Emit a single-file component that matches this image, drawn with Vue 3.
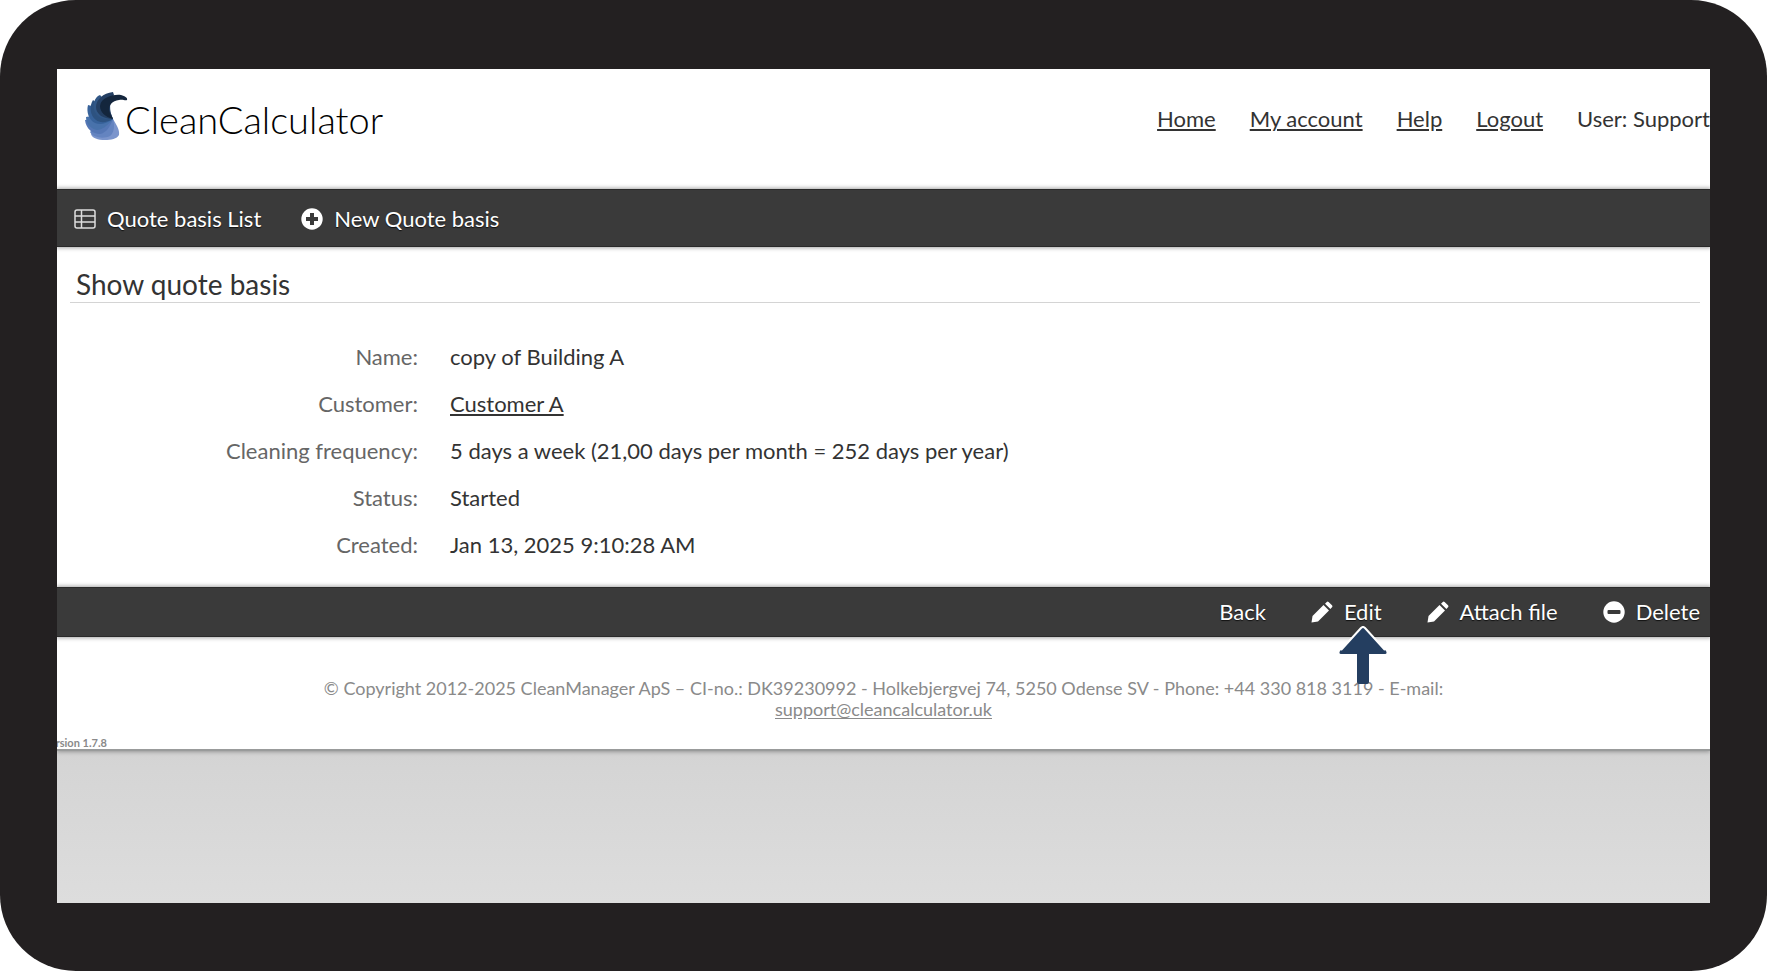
<script setup>
import { ref } from "vue";

const userLinks = ["Home", "My account", "Help", "Logout"];

const details = ref([
  { label: "Name", value: "copy of Building A" },
  { label: "Customer", value: "Customer A", link: true },
  { label: "Cleaning frequency", value: "5 days a week (21,00 days per month = 252 days per year)" },
  { label: "Status", value: "Started" },
  { label: "Created", value: "Jan 13, 2025 9:10:28 AM" }
]);

const actions = [
  { label: "Back" },
  { label: "Edit", icon: "pencil", pointer: true },
  { label: "Attach file", icon: "pencil" },
  { label: "Delete", icon: "minus" }
];
</script>

<template>
  <div class="frame">
    <div class="screen">
      <div class="page">
        <header class="header">
          <a class="logo" href="#">
            <svg class="logo-mark" viewBox="0 0 43 48" aria-hidden="true">
              <path fill="#7b95cc" d="M28 27C31 32 35 38 34 43C32 47 26 48 20 48C13 48 7 46 6 42C12 38 20 32 28 27Z" />
              <path fill="#6484c0" d="M28 27C30 34 29 41 25 44C19 47 8 46 5 40C10 34 18 30 28 27Z" />
              <path fill="#5577b5" d="M28 27C25 35 21 41 15 42C8 42 1 37 0 28C8 27 18 26 28 27Z" />
              <path fill="#4872ab" d="M28 27C22 34 17 38 12 38C6 37 1 32 1 25C8 23 18 24 28 27Z" />
              <path fill="#37629a" d="M28 27C21 32 15 33 10 31C4 28 1 20 3 13C10 15 20 19 28 27Z" />
              <path fill="#2d5280" d="M28 27C21 31 15 31 11 28C5 24 4 14 8 8C13 12 21 17 28 27Z" />
              <path fill="#315786" d="M28 27C19 28 12 25 10 20C7 14 9 5 15 3C20 8 24 16 28 27Z" />
              <path fill="#243f63" d="M28 27C18 27 11 22 11 15C11 8 18 1 28 0L29 3C24 10 24 18 28 27Z" />
              <path fill="#14263d" d="M28 27C20 25 15 20 15 14C16 6 27 2 36 3C40 4 43 6 42 8C40 9 38 7 34 8C27 9 24 13 24 18C25 22 27 24 28 27Z" />
            </svg>
            <span>CleanCalculator</span>
          </a>
          <nav class="user-nav">
            <a v-for="item in userLinks" :key="item" href="#">{{ item }}</a>
            <span>User: Support</span>
          </nav>
        </header>

        <nav class="bar">
          <a class="bar-item" href="#">
            <svg class="icon" viewBox="0 0 22 22" fill="none" stroke="#ddd" stroke-width="1.5" aria-hidden="true">
              <rect x="1" y="2" width="20" height="18" rx="2" />
              <path d="M7.500 2v18M1 8h20M1 14h20" />
            </svg>
            <span>Quote basis List</span>
          </a>
          <a class="bar-item" href="#">
            <svg class="icon" viewBox="0 0 22 22" aria-hidden="true">
              <circle cx="11" cy="11" r="10.700" fill="#fff" />
              <path d="M11 5v12M5 11h12" stroke="#3a3a3a" stroke-width="4" />
            </svg>
            <span>New Quote basis</span>
          </a>
        </nav>

        <main class="content">
          <h1>Show quote basis</h1>
          <dl class="details">
            <template v-for="row in details" :key="row.label">
              <dt>{{ row.label }}:</dt>
              <dd>
                <a v-if="row.link" href="#">{{ row.value }}</a>
                <template v-else>{{ row.value }}</template>
              </dd>
            </template>
          </dl>
        </main>

        <div class="bar actions">
          <button v-for="action in actions" :key="action.label" class="bar-item" type="button">
            <svg v-if="action.icon === 'pencil'" class="icon" viewBox="0 0 22 22" fill="#fff" aria-hidden="true">
              <path d="M0.500 21.500L1.500 15L12.500 4L18 9.500L7 20.500Z" />
              <path d="M14 2.700L15.800 0.900Q16.700 0 17.600 0.900L21 4.300Q22 5.300 21 6.300L19.400 8Z" />
            </svg>
            <svg v-else-if="action.icon === 'minus'" class="icon" viewBox="0 0 22 22" aria-hidden="true">
              <circle cx="11" cy="11" r="10.700" fill="#fff" />
              <rect x="4.500" y="9" width="13" height="4" rx="1" fill="#3a3a3a" />
            </svg>
            <span class="action-label">
              {{ action.label }}
              <svg v-if="action.pointer" class="pointer" viewBox="0 0 48 58" aria-hidden="true">
                <path d="M22 2L1 25Q-0.500 28 2 28H18V56Q18 58 20 58H28Q30 58 30 56V28H46Q48.500 28 47 25L26 2Q24 0 22 2Z" fill="#243e60" />
                <path d="M2 24L22 2Q24 0 26 2L46 24" fill="none" stroke="#fff" stroke-width="2" />
              </svg>
            </span>
          </button>
        </div>

        <footer class="footer">
          <p>
            © Copyright 2012-2025 CleanManager ApS – CI-no.: DK39230992 - Holkebjergvej 74, 5250 Odense SV - Phone: +44 330 818 3119 - E-mail:
            <a href="#">support@cleancalculator.uk</a>
          </p>
          <small>Version 1.7.8</small>
        </footer>
      </div>
    </div>
  </div>
</template>

<style>
body {
  margin: 0;
  background: #fff;
}
</style>

<style scoped>
.frame {
  box-sizing: border-box;
  min-height: 100vh;
  padding: 69px 57px 68px;
  display: flex;
  border-radius: 76px;
  background: #232021;
  font-family: Lato, "Open Sans", sans-serif;
  font-size: 22px;
  line-height: 28px;
  color: #333;
}

.screen {
  flex: 1;
  min-width: 0;
  overflow: hidden;
  background: linear-gradient(#d3d3d3 80%, #dddddd);
}

.page {
  background: #fff;
  border-bottom: 2px solid #999b9b;
  box-shadow: 0 1px 4px rgba(0, 0, 0, 0.3);
}

a {
  color: inherit;
  text-underline-offset: 2px;
}

.header {
  display: flex;
  justify-content: space-between;
  align-items: flex-start;
  height: 120px;
}

.logo {
  display: flex;
  padding: 23px 0 0 28px;
  color: #000;
  font-size: 38px;
  font-weight: 300;
  line-height: 54px;
  text-decoration: none;
}

.logo-mark {
  width: 43px;
  height: 48px;
  margin-right: -3px;
}

.user-nav {
  display: flex;
  gap: 34px;
  padding-top: 36px;
  white-space: nowrap;
}

.bar {
  position: relative;
  display: flex;
  align-items: center;
  gap: 40px;
  box-sizing: border-box;
  height: 58px;
  padding: 1px 17px 0;
  background: #3a3a3a;
  border-top: 1px solid #2a2a2a;
  border-bottom: 1px solid #2a2a2a;
  box-shadow: 0 0 4px 1px rgba(0, 0, 0, 0.35);
}

.bar-item {
  display: flex;
  align-items: center;
  gap: 11px;
  padding: 0;
  border: none;
  background: none;
  color: #fff;
  font: inherit;
  text-decoration: none;
  text-shadow: 0 1px 1px #111;
  cursor: pointer;
}

.icon {
  width: 22px;
  height: 22px;
}

.actions {
  justify-content: flex-end;
  gap: 45px;
  height: 50px;
  padding: 0 10px;
}

.action-label {
  position: relative;
}

.pointer {
  position: absolute;
  top: 28px;
  left: 50%;
  width: 48px;
  height: 58px;
  transform: translateX(-50%);
}

.content {
  padding: 20px 10px 28px 13px;
}

h1 {
  margin: 0;
  padding: 0 6px;
  border-bottom: 1px solid #d4d4d4;
  font-size: 28px;
  font-weight: 400;
  line-height: 35px;
}

.details {
  display: grid;
  grid-template-columns: 348px 1fr;
  gap: 19px 32px;
  margin: 40px 0 0;
}

dt {
  color: #666;
  text-align: right;
}

dd {
  margin: 0;
}

.footer {
  color: #8a8a8a;
  font-size: 18px;
  line-height: 21px;
}

.footer p {
  max-width: 1140px;
  margin: 0 auto;
  padding-top: 41px;
  text-align: center;
}

.footer small {
  display: block;
  margin: 16px 0 0 -14px;
  font-size: 11px;
  font-weight: 700;
  line-height: 13px;
}
</style>
